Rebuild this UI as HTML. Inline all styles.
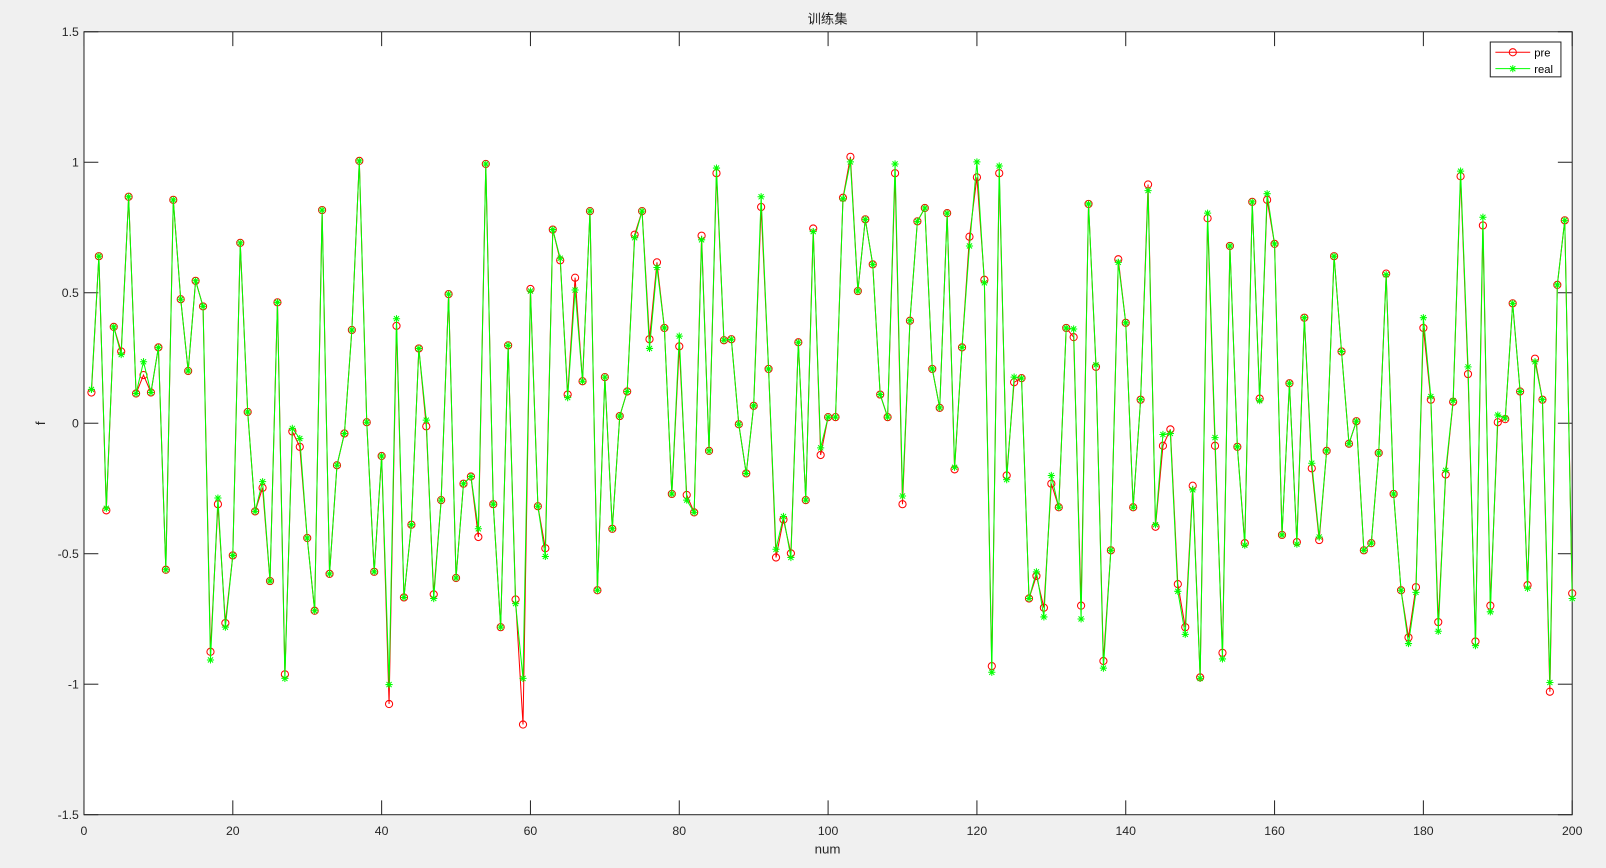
<!DOCTYPE html>
<html><head><meta charset="utf-8"><style>
body{margin:0;background:#f0f0f0;width:1606px;height:868px;overflow:hidden;font-family:"Liberation Sans","Noto Sans CJK SC",sans-serif}
</style></head><body>
<svg id="s" width="1606" height="868" viewBox="0 0 1568 847" preserveAspectRatio="none" xmlns="http://www.w3.org/2000/svg" style="position:absolute;left:0;top:0">
<rect x="82" y="31" width="1453" height="764" fill="#fff" stroke="#262626" stroke-width="1"/>
<g id="ticks" stroke="#262626" stroke-width="1"></g>
<g id="lab" font-size="12" fill="#262626"></g>
<text x="808" y="23" font-size="13" text-anchor="middle" fill="#222">训练集</text>
<text x="808" y="833" font-size="13" text-anchor="middle" fill="#262626">num</text>
<text x="44" y="413" font-size="13" text-anchor="middle" fill="#262626" transform="rotate(-90 44 413)">f</text>
<g id="pre"></g><g id="real"></g>
<g>
<rect x="1455" y="41" width="69" height="34" fill="#fff" stroke="#262626"/>
<line x1="1460" y1="51" x2="1494" y2="51" stroke="#f00"/><circle cx="1477" cy="51" r="3.5" fill="none" stroke="#f00"/>
<text x="1498" y="55" font-size="11" fill="#000">pre</text>
<line x1="1460" y1="67" x2="1494" y2="67" stroke="#0f0"/>
<path d="M1473.5 67h7M1477 63.5v7M1474.5 64.5l5 5M1479.5 64.5l-5 5" stroke="#0f0" fill="none"/>
<text x="1498" y="71" font-size="11" fill="#000">real</text>
</g>
</svg>
<script>
var Y=[383,250,498,319,343,192,384,366,383,339,556,195,292,362,274,299,636,492,608,542,237,402,499,476,567,295,658,421,436,525,596,205,560,454,423,322,157,412,558,445,687,318,583,512,340,416,580,488,287,564,472,465,524,160,492,612,337,585,707,282,494,535,224,254,385,271,372,206,576,368,516,406,382,229,206,331,256,320,482,338,483,500,230,440,169,332,331,414,462,396,202,360,544,507,540,334,488,223,444,407,407,193,153,284,214,258,385,407,169,492,313,216,203,360,398,208,458,339,231,173,273,650,169,464,373,369,584,562,593,472,495,320,329,591,199,358,645,537,253,315,495,390,180,514,435,419,570,612,474,661,213,435,637,240,436,530,197,389,195,238,522,374,529,310,457,527,440,250,343,433,411,537,530,442,267,482,576,622,573,320,390,607,463,392,172,365,626,220,591,412,409,296,382,571,350,390,675,278,215,579];
var R=Y.slice();
var ov={1:380,3:496,5:346,8:353,17:644,18:486,19:612,24:470,27:662,28:418,29:428,41:668,42:311,46:410,47:584,53:516,58:589,59:662,60:284,62:543,64:252,65:388,66:283,74:232,76:340,77:261,80:328,81:488,83:234,85:164,91:192,93:536,94:504,95:544,98:226,99:437,102:194,103:158,109:160,110:484,117:456,119:240,120:158,121:276,122:656,123:162,124:468,125:368,128:558,129:602,130:464,133:321,134:604,136:356,137:652,139:256,143:186,144:512,145:424,146:423,147:577,148:619,149:478,150:662,151:208,152:427,153:643,155:436,156:532,158:391,159:189,161:522,163:531,165:452,166:524,172:537,175:268,178:628,179:578,180:310,181:387,182:616,183:459,184:391,185:167,186:358,187:630,188:212,189:597,190:405,191:408,194:574,195:353,197:666,200:584};
for(var k in ov)R[k-1]=ov[k];
var ns="http://www.w3.org/2000/svg",s=document.getElementById('s');
function X(i){return 82+7.265*i}
function el(p,t,a,txt){var e=document.createElementNS(ns,t);for(var k in a)e.setAttribute(k,a[k]);if(txt)e.textContent=txt;p.appendChild(e);return e}
var pre=document.getElementById('pre'),real=document.getElementById('real');
el(pre,'polyline',{points:Y.map(function(y,i){return X(i+1)+','+y}).join(' '),fill:'none',stroke:'#f00','stroke-width':1});
Y.forEach(function(y,i){el(pre,'circle',{cx:X(i+1),cy:y,r:3.5,fill:'none',stroke:'#f00'})});
el(real,'polyline',{points:R.map(function(y,i){return X(i+1)+','+y}).join(' '),fill:'none',stroke:'#0f0','stroke-width':1});
R.forEach(function(y,i){var x=X(i+1);el(real,'path',{d:'M'+(x-3.5)+' '+y+'h7M'+x+' '+(y-3.5)+'v7M'+(x-2.5)+' '+(y-2.5)+'l5 5M'+(x+2.5)+' '+(y-2.5)+'l-5 5',stroke:'#0f0','stroke-width':1,fill:'none'})});
var tk=document.getElementById('ticks'),lab=document.getElementById('lab');
for(var v=0;v<=200;v+=20){var x=82+v*7.265;el(tk,'line',{x1:x,y1:795,x2:x,y2:781});el(tk,'line',{x1:x,y1:31,x2:x,y2:45});el(lab,'text',{x:x,y:815,'text-anchor':'middle'},String(v));}
var yl=['1.5','1','0.5','0','-0.5','-1','-1.5'];
for(var j=0;j<7;j++){var y=31+j*127.33;el(tk,'line',{x1:82,y1:y,x2:96,y2:y});el(tk,'line',{x1:1535,y1:y,x2:1521,y2:y});el(lab,'text',{x:77,y:y+4,'text-anchor':'end'},yl[j]);}
</script>
</body></html>
